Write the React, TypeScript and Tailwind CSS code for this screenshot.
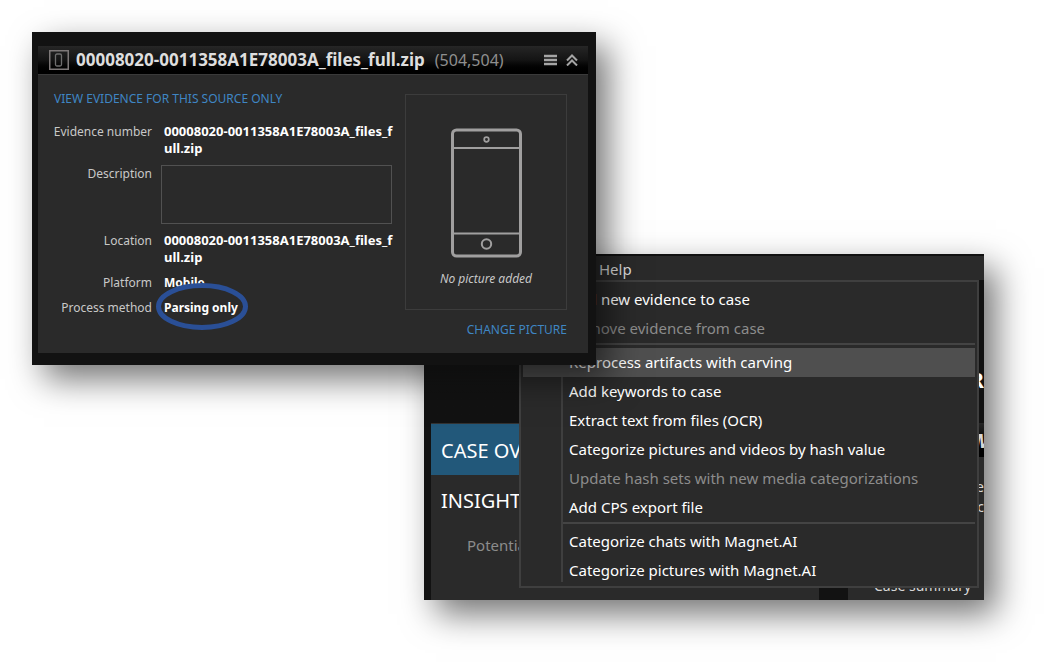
import React from "react";

const sourceName = ["00008020-0011358A1E78003A_files_f", "ull.zip"];

type MenuEntry = { label: string; disabled?: boolean; active?: boolean };

const menuGroups: MenuEntry[][] = [
  [
    { label: "Add new evidence to case" },
    { label: "Remove evidence from case", disabled: true },
  ],
  [
    { label: "Reprocess artifacts with carving", active: true },
    { label: "Add keywords to case" },
    { label: "Extract text from files (OCR)" },
    { label: "Categorize pictures and videos by hash value" },
    { label: "Update hash sets with new media categorizations", disabled: true },
    { label: "Add CPS export file" },
  ],
  [
    { label: "Categorize chats with Magnet.AI" },
    { label: "Categorize pictures with Magnet.AI" },
  ],
];

function DeviceIcon() {
  return (
    <svg width="20" height="20" viewBox="0 0 20 20" fill="none" aria-hidden="true">
      <rect x="0.75" y="0.75" width="18.5" height="18.5" stroke="#7d7878" strokeWidth="1.5" />
      <rect x="6.5" y="4" width="6" height="12" rx="1.5" stroke="#6e6e6e" strokeWidth="1.3" />
    </svg>
  );
}

function PhoneDrawing() {
  return (
    <svg width="72" height="130" viewBox="0 0 72 130" fill="none" stroke="#a09f9f" aria-hidden="true">
      <rect x="2.5" y="2" width="68" height="126" rx="4" strokeWidth="3" />
      <path d="M4 20h66M4 105.500h66" strokeWidth="2" />
      <circle cx="36.500" cy="11.500" r="2.300" strokeWidth="1.700" />
      <circle cx="36.500" cy="116" r="4.700" strokeWidth="2" />
    </svg>
  );
}

function SourceName() {
  return (
    <strong className="text-left text-[13px] whitespace-nowrap text-white">
      {sourceName[0]}
      <br />
      {sourceName[1]}
    </strong>
  );
}

function EvidenceWindow() {
  return (
    <section className="absolute left-8 top-8 w-[564px] bg-[#121212] pt-3.5 pr-2 pb-3 pl-1.5 shadow-[12px_14px_32px_rgba(0,0,0,0.55)]">
      <div className="bg-[#2a2a2a]">
        <header className="flex h-[29px] items-center border-b border-[#3a3a3a] bg-linear-to-b from-[#262626] via-[#141414] to-black pr-2.5 pl-[11px]">
          <DeviceIcon />
          <h1 className="ml-[7px] text-[17px] leading-5 font-bold text-[#dedede]">
            00008020-0011358A1E78003A_files_full.zip
          </h1>
          <span className="ml-2.5 text-[16px] leading-5 text-[#8f8f8f]">(504,504)</span>
          <button type="button" aria-label="Options" className="ml-auto">
            <svg width="14" height="12" viewBox="0 0 14 12" aria-hidden="true">
              <path d="M0 2h13M0 6h13M0 10h13" stroke="#a5a5a5" strokeWidth="2.500" />
            </svg>
          </button>
          <button type="button" aria-label="Collapse" className="ml-2">
            <svg width="12" height="12" viewBox="0 0 12 12" fill="none" stroke="#a5a5a5" strokeWidth="2" aria-hidden="true">
              <path d="M1 6.500l5-5 5 5M1 11.500l5-5 5 5" />
            </svg>
          </button>
        </header>

        <div className="flex h-[278px] justify-between pr-[21px] pl-4 text-[12px] leading-[17px] text-[#c8c8c8]">
          <div className="w-[338px] pt-[15px]">
            <a href="#evidence" className="block leading-[17px] text-[#3f86c4]">
              VIEW EVIDENCE FOR THIS SOURCE ONLY
            </a>
            <div className="mt-4 grid grid-cols-[98px_1fr] gap-x-3 gap-y-2 text-right">
              <span className="flex justify-end whitespace-nowrap">Evidence number</span>
              <SourceName />
              <label htmlFor="description">Description</label>
              <textarea
                id="description"
                className="-ml-[3px] block h-[59px] w-[231px] resize-none border border-[#515151] bg-transparent p-1 text-white outline-none"
              />
              <span>Location</span>
              <SourceName />
              <span>Platform</span>
              <strong className="text-left text-white">Mobile</strong>
              <span>Process method</span>
              <strong className="relative text-left text-white">
                Parsing only
                <svg
                  className="absolute -top-4 -left-2"
                  width="92"
                  height="48"
                  viewBox="0 0 92 48"
                  fill="none"
                  aria-hidden="true"
                >
                  <ellipse cx="46" cy="23.500" rx="43.500" ry="21" stroke="#2a4f96" strokeWidth="5" />
                </svg>
              </strong>
            </div>
          </div>

          <div className="flex w-[162px] flex-col items-end pt-[19px]">
            <figure className="flex h-[216px] w-full flex-col items-center border border-[#3c3c3c] pt-[33px]">
              <PhoneDrawing />
              <figcaption className="mt-3 italic">No picture added</figcaption>
            </figure>
            <button type="button" className="mt-[11px] text-[#3f86c4]">
              CHANGE PICTURE
            </button>
          </div>
        </div>
      </div>
    </section>
  );
}

function ProcessMenu() {
  return (
    <div
      role="menu"
      className="absolute top-[26px] left-[95px] w-[460px] border-2 border-[#3f3f3f] bg-[#2a2a2a] px-0.5 pt-[3px] pb-px"
    >
      <div className="absolute top-0 bottom-1 left-10 w-0.5 bg-[#3f3f3f]" />
      {menuGroups.map((group, index) => (
        <div key={index}>
          {index > 0 && (
            <div className="flex h-[5px] items-start pl-[38px]">
              <div className="h-0.5 w-full bg-[#444444]" />
            </div>
          )}
          {group.map((item) => (
            <button
              key={item.label}
              type="button"
              role="menuitem"
              disabled={item.disabled}
              className={
                "relative block h-[29px] w-full pl-[46px] text-left text-[15px] leading-[29px] whitespace-nowrap " +
                (item.active ? "bg-[#4f4f4f] " : "") +
                (item.disabled ? "text-[#8c8c8c]" : "text-white")
              }
            >
              {item.label}
            </button>
          ))}
        </div>
      ))}
    </div>
  );
}

function CaseWindow() {
  return (
    <section className="absolute top-[254px] left-[424px] w-[560px] bg-[#121212] shadow-[12px_14px_32px_rgba(0,0,0,0.55)]">
      <div className="relative flex h-[346px] flex-col overflow-hidden">
        <nav className="flex h-[26px] shrink-0 items-end border-t-2 border-[#111111] bg-[#2a2a2a] pl-[175px]">
          <button type="button" className="h-6 text-[15px] leading-[26px] text-[#dddddd]">
            Help
          </button>
        </nav>
        <div className="flex h-[143px] shrink-0 items-end justify-end bg-linear-to-b from-[#2a2a2a] via-[#1c1d1d] to-[#121212] to-80%">
          <div className="flex h-[143px] items-end justify-end bg-[#121212] pb-7 text-[22px] leading-8 font-bold text-white">
            R
          </div>
        </div>
        <div className="flex grow pl-[7px]">
          <div className="w-[388px] bg-[#2a2a2a]">
            <h2 className="h-[52px] border-t border-[#333333] bg-[#22587a] pl-2.5 text-[20px] leading-[54px] text-white">
              CASE OV
            </h2>
            <h2 className="pl-2.5 text-[20px] leading-[52px] text-white">INSIGHT</h2>
            <p className="pt-1 pl-9 text-[15px] leading-7 text-[#8c8c8c]">Potentia</p>
          </div>
          <div className="ml-[29px] flex w-[136px] flex-col bg-[#2a2a2a] text-[#d6d6d6]">
            <div className="flex h-[34px] shrink-0 justify-end bg-linear-to-b from-[#262626] to-black">
              <span className="w-[9px] text-[20px] leading-9 font-bold italic">M</span>
            </div>
            <div className="flex flex-col items-end pt-5 text-[14px] leading-5">
              <span>e</span>
              <span>ec</span>
            </div>
            <p className="mt-auto pb-1 pl-[26px] text-[14px] leading-5">Case summary</p>
          </div>
        </div>
        <ProcessMenu />
      </div>
    </section>
  );
}

export default function App() {
  return (
    <main className="relative min-h-screen overflow-hidden bg-white font-['Noto_Sans','Open_Sans',sans-serif]">
      <CaseWindow />
      <EvidenceWindow />
    </main>
  );
}
